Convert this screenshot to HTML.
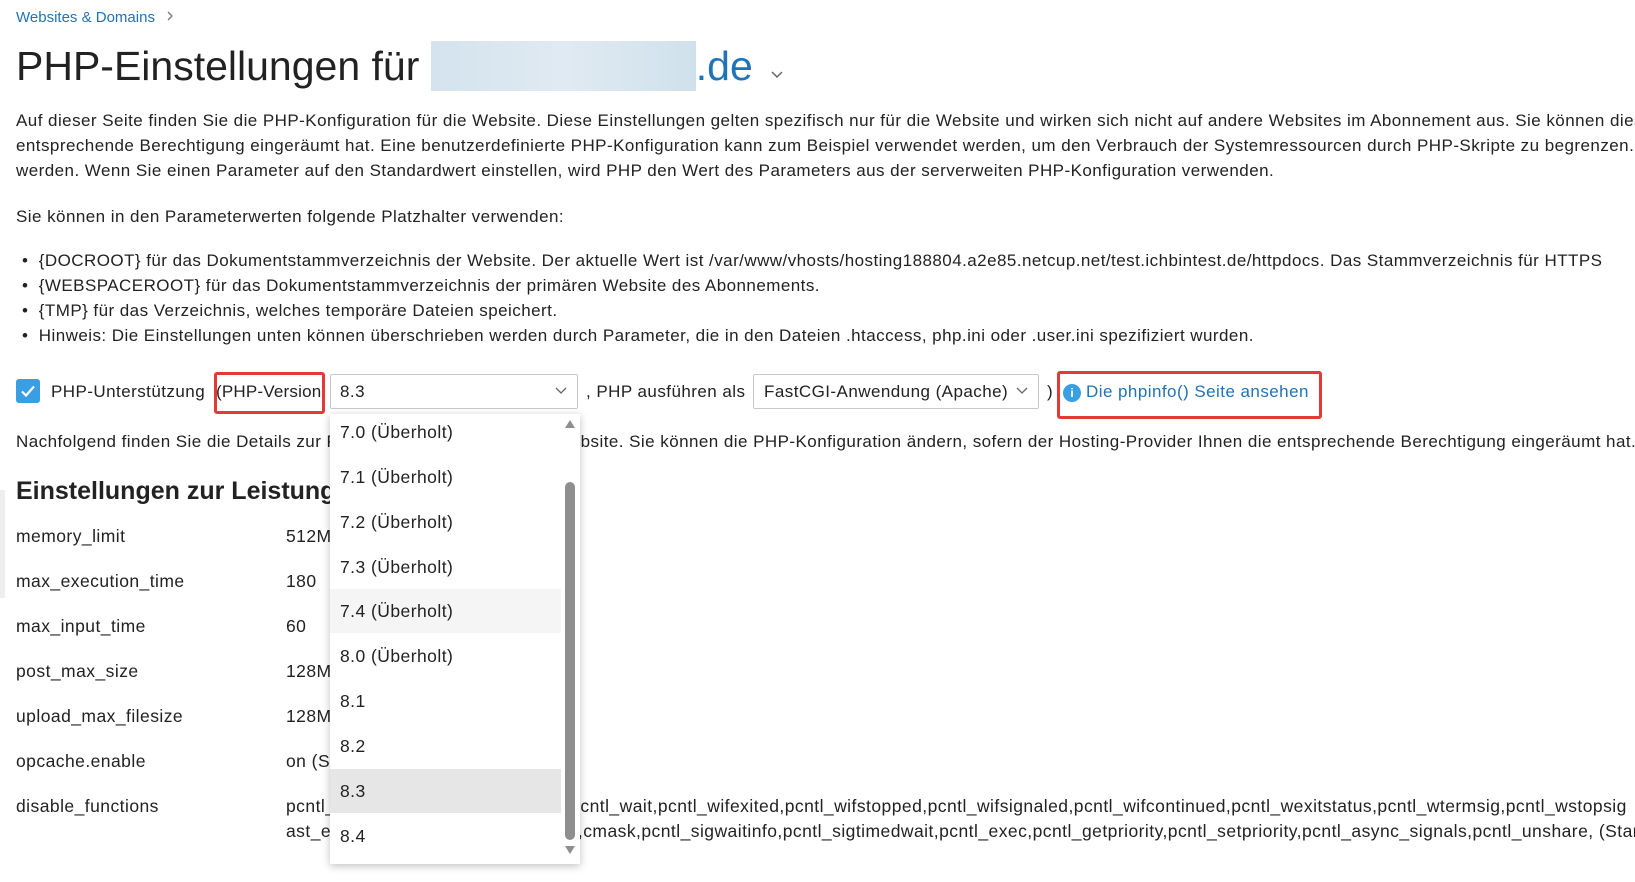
<!DOCTYPE html>
<html><head><meta charset="utf-8"><style>
*{margin:0;padding:0;box-sizing:border-box}
body{width:1635px;height:882px;overflow:hidden;background:#fff;font-family:"Liberation Sans",sans-serif;color:#222;font-size:17px;letter-spacing:0.45px}
#w{position:relative;width:1635px;height:882px;overflow:hidden}
.a{position:absolute;white-space:nowrap}
.l{line-height:25px}
a{color:#1f73b7;text-decoration:none}
.red{position:absolute;border:3px solid #e53935;border-radius:3px}
.sel{position:absolute;border:1px solid #c8c8c8;border-radius:2px;background:#fff}
.dd{position:absolute;left:330px;top:414px;width:250px;height:450px;background:#fff;box-shadow:0 2px 8px rgba(0,0,0,.25)}
.it{position:absolute;left:0;width:231px;height:44px;line-height:44px;padding-left:10px;font-size:17.5px;color:#222}
.r{position:absolute;left:16px;font-size:17.5px}
.v{position:absolute;left:286px;font-size:17.5px}
</style></head><body><div id="w">
<div class="a" style="left:16px;top:9px;font-size:15px;color:#1f73b7;letter-spacing:0">Websites &amp; Domains <svg width="10" height="12" style="margin-left:6px"><path d="M3 2l4 4-4 4" fill="none" stroke="#777" stroke-width="1.3"/></svg></div>
<div class="a" style="left:16px;top:41px;font-size:41px;line-height:50px;color:#222;letter-spacing:0">PHP-Einstellungen für <span style="display:inline-block;width:265px;height:50px;background:linear-gradient(90deg,#d4e3ee,#e0eaf2,#d0e1ec);vertical-align:top"></span><span style="color:#1f73b7">.de</span> <svg width="14" height="10" style="margin-left:6px"><path d="M2 2l5 5 5-5" fill="none" stroke="#666" stroke-width="1.5"/></svg></div>
<div class="a l" style="left:16px;top:108px">Auf dieser Seite finden Sie die PHP-Konfiguration für die Website. Diese Einstellungen gelten spezifisch nur für die Website und wirken sich nicht auf andere Websites im Abonnement aus. Sie können diese</div>
<div class="a l" style="left:16px;top:133px">entsprechende Berechtigung eingeräumt hat. Eine benutzerdefinierte PHP-Konfiguration kann zum Beispiel verwendet werden, um den Verbrauch der Systemressourcen durch PHP-Skripte zu begrenzen.</div>
<div class="a l" style="left:16px;top:158px">werden. Wenn Sie einen Parameter auf den Standardwert einstellen, wird PHP den Wert des Parameters aus der serverweiten PHP-Konfiguration verwenden.</div>
<div class="a l" style="left:16px;top:204px">Sie können in den Parameterwerten folgende Platzhalter verwenden:</div>
<div class="a l" style="left:22px;top:248px">•&nbsp; {DOCROOT} für das Dokumentstammverzeichnis der Website. Der aktuelle Wert ist /var/www/vhosts/hosting188804.a2e85.netcup.net/test.ichbintest.de/httpdocs. Das Stammverzeichnis für HTTPS</div>
<div class="a l" style="left:22px;top:273px">•&nbsp; {WEBSPACEROOT} für das Dokumentstammverzeichnis der primären Website des Abonnements.</div>
<div class="a l" style="left:22px;top:298px">•&nbsp; {TMP} für das Verzeichnis, welches temporäre Dateien speichert.</div>
<div class="a l" style="left:22px;top:323px">•&nbsp; Hinweis: Die Einstellungen unten können überschrieben werden durch Parameter, die in den Dateien .htaccess, php.ini oder .user.ini spezifiziert wurden.</div>

<div class="a" style="left:16px;top:379px;width:24px;height:24px;background:#3a9ee3;border-radius:3px"><svg width="24" height="24"><path d="M6 12.5l4 4 8-9" fill="none" stroke="#fff" stroke-width="2.2"/></svg></div>
<div class="a l" style="left:51px;top:379px">PHP-Unterstützung</div>
<div class="red" style="left:214px;top:372px;width:111px;height:42px"></div>
<div class="a l" style="left:216px;top:379px;letter-spacing:0.2px">(PHP-Version</div>
<div class="sel" style="left:330px;top:374px;width:248px;height:35px"></div>
<div class="a l" style="left:340px;top:379px">8.3</div>
<svg class="a" style="left:555px;top:387px" width="12" height="8"><path d="M1 1l5 5 5-5" fill="none" stroke="#666" stroke-width="1.3"/></svg>
<div class="a l" style="left:586px;top:379px">, PHP ausführen als</div>
<div class="sel" style="left:753px;top:374px;width:286px;height:35px"></div>
<div class="a l" style="left:764px;top:379px">FastCGI-Anwendung (Apache)</div>
<svg class="a" style="left:1016px;top:387px" width="12" height="8"><path d="M1 1l5 5 5-5" fill="none" stroke="#666" stroke-width="1.3"/></svg>
<div class="a l" style="left:1047px;top:379px">)</div>
<div class="red" style="left:1057px;top:371px;width:265px;height:48px"></div>
<div class="a" style="left:1063px;top:384px;width:18px;height:18px;border-radius:50%;background:#3a9ee3;color:#fff;font-size:12px;line-height:18px;text-align:center;font-weight:bold;letter-spacing:0">i</div>
<div class="a l" style="left:1086px;top:379px"><a>Die phpinfo() Seite ansehen</a></div>

<div class="a l" style="left:16px;top:429px">Nachfolgend finden Sie die Details zur PHP-Konfiguration für diese Website. Sie können die PHP-Konfiguration ändern, sofern der Hosting-Provider Ihnen die entsprechende Berechtigung eingeräumt hat. <a>E</a></div>
<div class="a" style="left:16px;top:476px;font-size:25px;font-weight:bold;line-height:30px;letter-spacing:0">Einstellungen zur Leistung</div>
<div class="a" style="left:0;top:490px;width:5px;height:108px;background:#eee"></div>

<div class="r" style="top:526px">memory_limit</div><div class="v" style="top:526px">512M</div>
<div class="r" style="top:571px">max_execution_time</div><div class="v" style="top:571px">180</div>
<div class="r" style="top:616px">max_input_time</div><div class="v" style="top:616px">60</div>
<div class="r" style="top:661px">post_max_size</div><div class="v" style="top:661px">128M</div>
<div class="r" style="top:706px">upload_max_filesize</div><div class="v" style="top:706px">128M</div>
<div class="r" style="top:751px">opcache.enable</div><div class="v" style="top:751px">on (Standard)</div>
<div class="r" style="top:796px">disable_functions</div>
<div class="v" style="top:796px;white-space:nowrap">pcntl_alarm,pcntl_fork,pcntl_waitp,pcntl_wait,pcntl_wifexited,pcntl_wifstopped,pcntl_wifsignaled,pcntl_wifcontinued,pcntl_wexitstatus,pcntl_wtermsig,pcntl_wstopsig</div>
<div class="v" style="top:821px;white-space:nowrap">ast_error,pcntl_strerror,pcntl_sigpro,cmask,pcntl_sigwaitinfo,pcntl_sigtimedwait,pcntl_exec,pcntl_getpriority,pcntl_setpriority,pcntl_async_signals,pcntl_unshare, (Standard)</div>

<div class="dd">
<div class="it" style="top:-4px">7.0 (Überholt)</div>
<div class="it" style="top:41px">7.1 (Überholt)</div>
<div class="it" style="top:86px">7.2 (Überholt)</div>
<div class="it" style="top:131px">7.3 (Überholt)</div>
<div class="it" style="top:175px;background:#f5f5f5">7.4 (Überholt)</div>
<div class="it" style="top:220px">8.0 (Überholt)</div>
<div class="it" style="top:265px">8.1</div>
<div class="it" style="top:310px">8.2</div>
<div class="it" style="top:355px;background:#e6e6e6">8.3</div>
<div class="it" style="top:400px">8.4</div>
<div style="position:absolute;left:235px;top:68px;width:10px;height:358px;background:#8e8e8e;border-radius:5px"></div>
<svg style="position:absolute;left:234px;top:5px" width="12" height="10"><path d="M6 1l5 8H1z" fill="#8e8e8e"/></svg>
<svg style="position:absolute;left:234px;top:431px" width="12" height="10"><path d="M1 1h10L6 9z" fill="#8e8e8e"/></svg>
</div>
</div></body></html>
